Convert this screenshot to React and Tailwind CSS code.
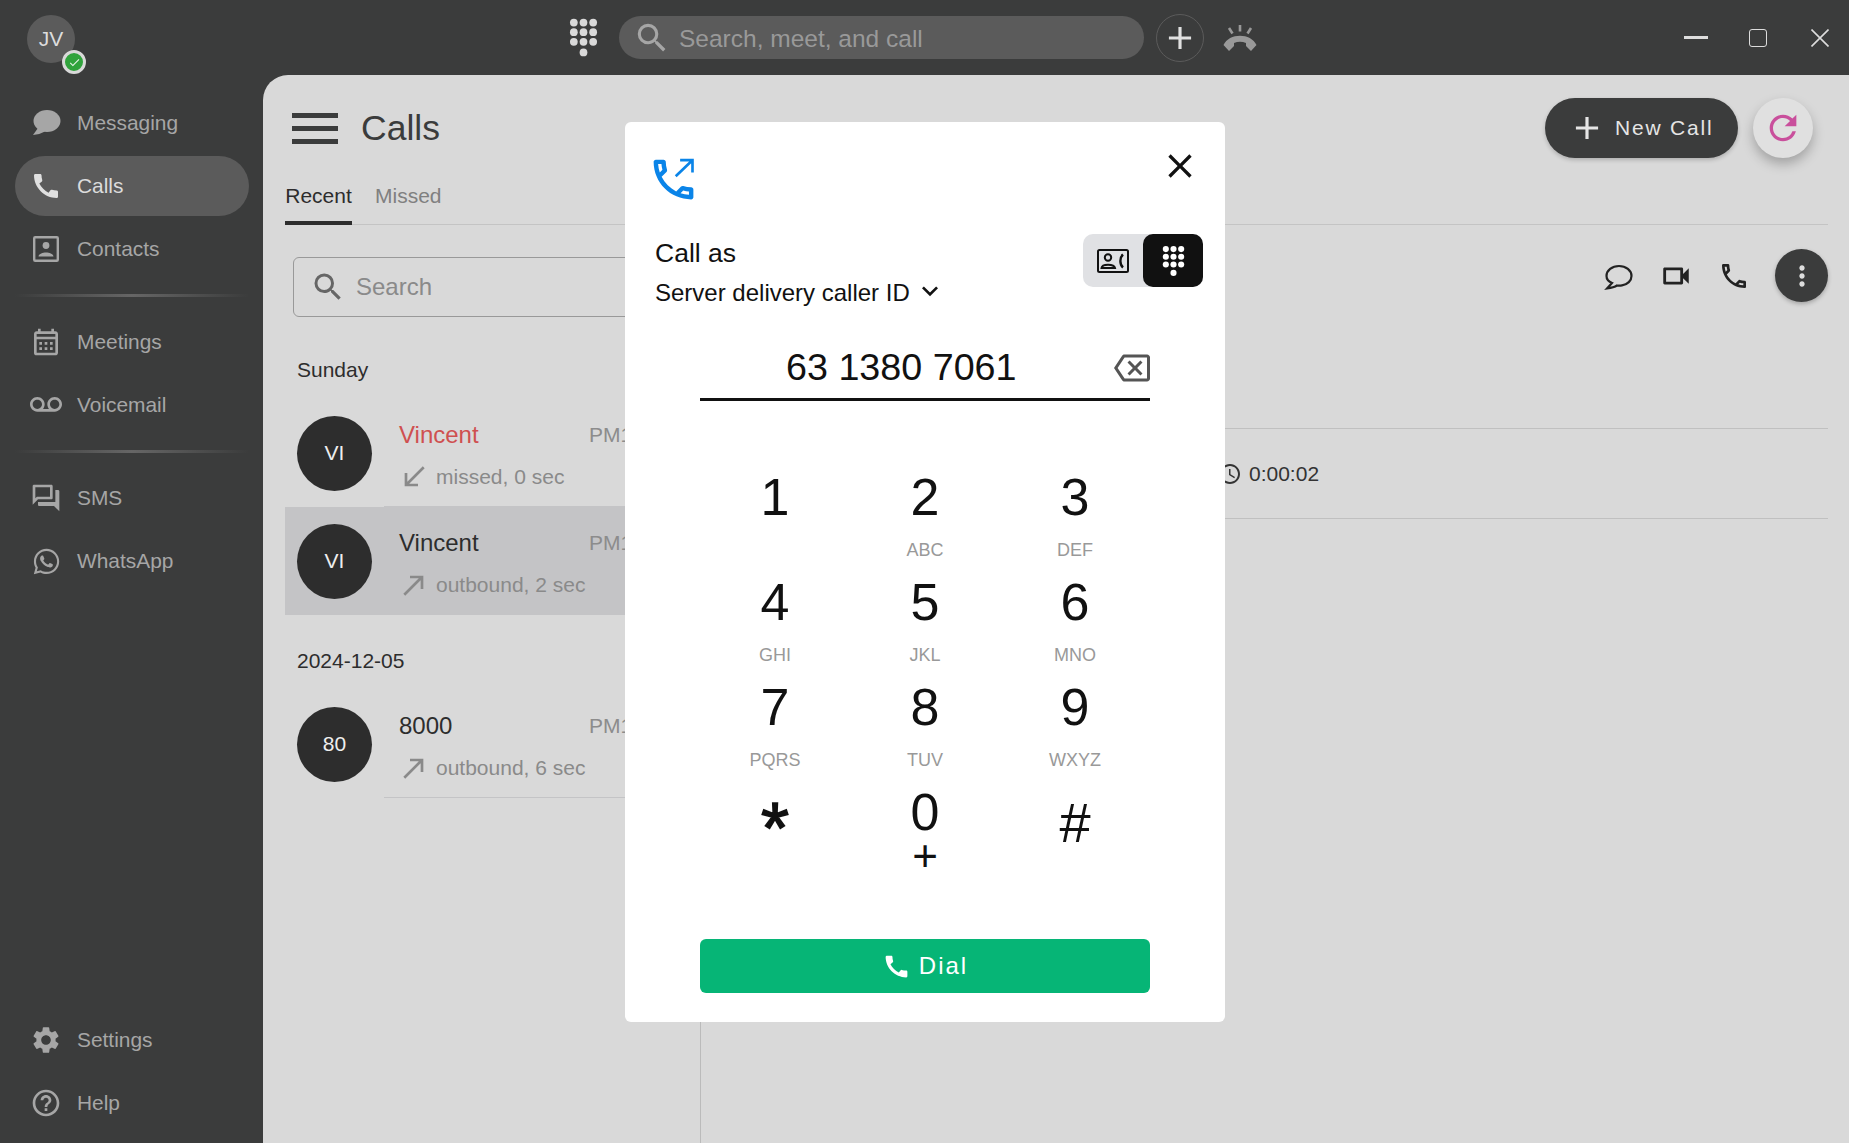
import {
  MdCall, MdOutlineCall, MdOutlineCalendarMonth, MdOutlineVoicemail, MdOutlineForum,
  MdSettings, MdHelpOutline, MdSearch, MdAdd, MdRefresh, MdClose, MdOutlineBackspace, MdAccessTime,
  MdOutlineVideocam, MdMoreVert, MdCallMade, MdCallReceived, MdKeyboardArrowDown, MdCheck,
} from "react-icons/md";
import { FaWhatsapp } from "react-icons/fa";

const KEYS = [
  ["1", ""], ["2", "ABC"], ["3", "DEF"],
  ["4", "GHI"], ["5", "JKL"], ["6", "MNO"],
  ["7", "PQRS"], ["8", "TUV"], ["9", "WXYZ"],
];

function Dialpad({ className }) {
  const dots = [];
  [4, 14, 24].forEach((y) => [5, 15, 25].forEach((x) => dots.push([x, y])));
  dots.push([15, 35]);
  return (
    <svg viewBox="0 0 30 39" className={className} fill="currentColor">
      {dots.map(([x, y]) => <circle key={`${x}-${y}`} cx={x} cy={y} r="4" />)}
    </svg>
  );
}

function Bubble({ outline }) {
  if (outline) {
    return (
      <svg viewBox="0 0 32 32" className="w-8 h-8" fill="none" stroke="#222" strokeWidth="2.2">
        <path d="M10 23 L5 28.5 Q12 27.5 15 25.5 Q17.5 25.8 20 25.4 C25.5 24.5 29.5 20.8 29.5 16 C29.5 10.5 24 6 17 6 C10 6 4.5 10.5 4.5 16 C4.5 19 6.5 21.5 10 23 Z" />
      </svg>
    );
  }
  return (
    <svg viewBox="0 0 32 32" className="w-8 h-8" fill="#a6a6a6">
      <ellipse cx="17" cy="14" rx="13.5" ry="11" />
      <path d="M8 21 L3 28 Q10 27.5 15 24.5 Z" />
    </svg>
  );
}

function ContactBox() {
  return (
    <svg viewBox="0 0 32 32" className="w-8 h-8" fill="#a6a6a6">
      <rect x="4.2" y="4.2" width="23.6" height="23.6" rx="1" fill="none" stroke="#a6a6a6" strokeWidth="2.4" />
      <circle cx="16" cy="12.5" r="3.4" />
      <path d="M8.5 23.5 C9 18 23 18 23.5 23.5 Z" />
    </svg>
  );
}

function NavItem({ icon, label, active }) {
  return (
    <div className={`flex items-center h-[60px] w-[234px] pl-[15px] gap-[15px] rounded-full text-[20.9px] ${active ? "bg-[#5b5b5b] text-[#dcdcdc]" : "text-[#a6a6a6]"}`}>
      <span className={`flex items-center justify-center w-8 h-8 ${active ? "text-[#e0e0e0]" : "text-[#a6a6a6]"}`}>{icon}</span>
      {label}
    </div>
  );
}

function NavDivider({ className }) {
  return <div className={`h-[3px] w-[234px] bg-linear-to-r from-transparent via-[#666666] to-transparent ${className}`} />;
}

function CallRow({ initials, name, missed, status, selected, last }) {
  return (
    <div className={`flex h-[108px] pl-3 whitespace-nowrap ${selected ? "bg-[#c4c4c6]" : ""}`}>
      <div className="flex items-center justify-center w-[75px] h-[108px] shrink-0">
        <div className="flex items-center justify-center w-[75px] h-[75px] rounded-full bg-[#2d2d2d] text-[#eeeeee] text-[21px]">{initials}</div>
      </div>
      <div className={`flex-1 ml-3 pl-[15px] pt-[22px] ${last || !selected ? "border-b border-[#c4c4c6]" : ""}`}>
        <div className="flex items-center h-7">
          <span className={`w-[190px] text-[24px] leading-7 ${missed ? "text-[#cf5050]" : "text-[#2d2d2d]"}`}>{name}</span>
          <span className="text-[21px] text-[#8c8c8c]">PM1:24</span>
        </div>
        <div className="flex items-center mt-4 h-6 -ml-px text-[21px] text-[#8a8a8a] gap-[6px]">
          {missed ? <MdCallReceived size={32} /> : <MdCallMade size={32} />}
          {status}
        </div>
      </div>
    </div>
  );
}

export default function App() {
  return (
    <div className="relative flex flex-col w-[1849px] h-[1143px] overflow-hidden bg-[#3b3c3c] font-[Liberation_Sans,Arial,sans-serif]">
      {/* Title bar */}
      <div className="flex items-center h-[75px] shrink-0 pl-[27px] pr-5">
        <div className="relative flex items-center justify-center w-12 h-12 mt-[3px] rounded-full bg-[#5b5b5b] text-[#dddddd] text-[21px]">
          JV
          <div className="absolute left-[35px] top-[35px] flex items-center justify-center w-6 h-6 rounded-full bg-[#30a33c] border-[3px] border-[#d9d9d9]">
            <MdCheck size={13} className="text-[#e8f5e9]" />
          </div>
        </div>
        <Dialpad className="w-[29px] h-[39px] ml-[494px] -mt-px text-[#d9d9d9]" />
        <div className="flex items-center w-[525px] h-[43px] ml-[21px] pl-3.5 gap-2 rounded-full bg-[#5b5b5b] text-[24.5px] text-[#999999]">
          <MdSearch size={38} className="text-[#a6a6a6]" />
          <span className="pt-1">Search, meet, and call</span>
        </div>
        <div className="flex items-center justify-center w-12 h-12 ml-3 rounded-full border border-[#5b5b5b] text-[#e0e0e0]">
          <MdAdd size={38} />
        </div>
        <svg viewBox="0 0 34 26" className="w-[34px] h-[26px] ml-[19px]" fill="#999999" stroke="none">
          <path d="M0.5 20 C6 7.5 28 7.5 33.5 20 L28 26 L23 21 L23 18 C19 16.3 15 16.3 11 18 L11 21 L6 26 Z" />
          <path d="M17 0 V6.5 M6 3 L9.5 8.5 M28 3 L24.5 8.5" stroke="#999999" strokeWidth="2.6" fill="none" />
        </svg>
        <div className="w-6 h-[3px] ml-auto bg-[#dddddd]" />
        <div className="w-[18px] h-[18px] ml-[41px] rounded-[3px] border border-[#dddddd]" />
        <svg viewBox="0 0 18 18" className="w-[18px] h-[18px] ml-11" stroke="#dddddd" strokeWidth="1.6">
          <path d="M0.5 0.5 L17.5 17.5 M17.5 0.5 L0.5 17.5" />
        </svg>
      </div>

      <div className="flex flex-1 min-h-0">
        {/* Sidebar */}
        <div className="flex flex-col w-[263px] shrink-0 pl-[15px] pt-[18px] pb-2.5">
          <div className="flex flex-col gap-[3px]">
            <NavItem icon={<Bubble />} label="Messaging" />
            <NavItem icon={<MdCall size={32} />} label="Calls" active />
            <NavItem icon={<ContactBox />} label="Contacts" />
          </div>
          <NavDivider className="mt-[15px] mb-[15px]" />
          <div className="flex flex-col gap-[3px]">
            <NavItem icon={<MdOutlineCalendarMonth size={32} />} label="Meetings" />
            <NavItem icon={<MdOutlineVoicemail size={32} />} label="Voicemail" />
          </div>
          <NavDivider className="mt-[15px] mb-[15px]" />
          <div className="flex flex-col gap-[3px]">
            <NavItem icon={<MdOutlineForum size={32} />} label="SMS" />
            <NavItem icon={<FaWhatsapp size={29} />} label="WhatsApp" />
          </div>
          <div className="flex flex-col gap-[3px] mt-auto">
            <NavItem icon={<MdSettings size={32} />} label="Settings" />
            <NavItem icon={<MdHelpOutline size={32} />} label="Help" />
          </div>
        </div>

        {/* Main panel */}
        <div className="flex flex-col flex-1 min-w-0 pl-[22px] pr-[21px] rounded-tl-[25px] bg-[#d9d9d9]">
          <div className="flex items-center h-[60px] mt-[23px] shrink-0">
            <div className="flex flex-col gap-2 w-[46px] ml-[7px]">
              <div className="h-[5px] bg-[#3b3c3c]" />
              <div className="h-[5px] bg-[#3b3c3c]" />
              <div className="h-[5px] bg-[#3b3c3c]" />
            </div>
            <div className="ml-[23px] pt-0.5 text-[35.5px] text-[#3b3c3c]">Calls</div>
            <div className="flex items-center w-[193px] h-[60px] ml-auto pl-[23px] gap-[9px] rounded-full bg-[#3b3c3c] text-[#e5e5e5] text-[21px] tracking-[1.8px] shadow-[0_2px_4px_rgba(0,0,0,0.2)]">
              <MdAdd size={38} />
              New Call
            </div>
            <div className="flex items-center justify-center w-[60px] h-[60px] ml-[15px] mr-[15px] rounded-full bg-[#e0e0e0] text-[#c94f9c] shadow-[0_6px_12px_rgba(0,0,0,0.25)]">
              <MdRefresh size={40} />
            </div>
          </div>

          <div className="flex h-[67px] shrink-0 items-end gap-6 border-b border-[#c4c4c4] text-[21px]">
            <div className="flex items-center h-[46px] w-[67px] justify-center -mb-px pb-2 border-b-4 border-[#2d2d2d] text-[#2d2d2d]">Recent</div>
            <div className="flex items-center h-[46px] pb-3 -mb-px -ml-px text-[#808080]">Missed</div>
          </div>

          <div className="flex flex-1 min-h-0">
            {/* Call history */}
            <div className="w-[416px] shrink-0 pt-8 border-r border-[#bbbbbb] overflow-hidden">
              <div className="flex items-center h-[60px] ml-2 mr-2.5 pl-4 gap-2.5 rounded-[6px] border border-[#999999] text-[24px] text-[#8a8a8a]">
                <MdSearch size={36} className="text-[#666666]" />
                Search
              </div>
              <div className="h-7 mt-[39px] mb-[15px] ml-3 text-[21px] leading-7 text-[#2d2d2d]">Sunday</div>
              <CallRow initials="VI" name="Vincent" missed status="missed, 0 sec" />
              <CallRow initials="VI" name="Vincent" status="outbound, 2 sec" selected />
              <div className="h-7 mt-8 mb-[15px] ml-3 text-[21px] leading-7 text-[#2d2d2d]">2024-12-05</div>
              <CallRow initials="80" name="8000" status="outbound, 6 sec" last />
            </div>

            {/* Call details */}
            <div className="flex-1 min-w-0">
              <div className="flex items-center justify-end gap-[25px] h-[53px] mt-6 text-[#222222]">
                <Bubble outline />
                <MdOutlineVideocam size={34} />
                <MdOutlineCall size={32} />
                <div className="flex items-center justify-center w-[53px] h-[53px] rounded-full bg-[#3b3c3c] text-[#dddddd] shadow-[0_2px_4px_rgba(0,0,0,0.25)]">
                  <MdMoreVert size={32} />
                </div>
              </div>
              <div className="flex items-center h-[91px] mt-[126px] pl-[517px] gap-[7px] border-y border-[#c0c0c0] text-[21px] text-[#333333]">
                <MdAccessTime size={24} />
                0:00:02
              </div>
            </div>
          </div>
        </div>
      </div>

      {/* Dial dialog */}
      <div className="absolute left-[625px] top-[122px] w-[600px] h-[900px] pt-[38px] pl-[30px] pr-[22px] rounded-[6px] bg-white text-[#111111]">
        <div className="flex justify-between h-10">
          <svg viewBox="0 0 24 24" className="w-[53px] h-[53px] -ml-2 -mt-[7px]" fill="#0a84e8">
            <path d="M6.54 5c.06.89.21 1.76.45 2.59l-1.2 1.2c-.41-1.2-.67-2.47-.76-3.79h1.51m9.86 12.02c.85.24 1.72.39 2.6.45v1.49c-1.32-.09-2.59-.35-3.8-.75l1.2-1.19M7.5 3H4c-.55 0-1 .45-1 1 0 9.39 7.61 17 17 17 .55 0 1-.45 1-1v-3.49c0-.55-.45-1-1-1-1.24 0-2.45-.2-3.57-.57-.1-.04-.21-.05-.31-.05-.26 0-.51.1-.71.29l-2.2 2.2c-2.83-1.45-5.15-3.76-6.59-6.59l2.2-2.2c.28-.28.36-.67.25-1.02C8.7 6.45 8.5 5.25 8.5 4c0-.55-.45-1-1-1z" />
            <path d="M13 10.5 L20.2 3.6 M15 3.2 H20.6 V8.8" fill="none" stroke="#0a84e8" strokeWidth="1.2" />
          </svg>
          <MdClose size={40} className="-mt-3.5 mr-[3px]" />
        </div>

        <div className="flex justify-between mt-[34px]">
          <div>
            <div className="mt-1 text-[26.5px] leading-[30px]">Call as</div>
            <div className="flex items-center h-7 mt-[11px] text-[24px] leading-7">
              Server delivery caller ID
              <MdKeyboardArrowDown size={32} className="ml-1 -mt-1" />
            </div>
          </div>
          <div className="flex w-[120px] h-[53px] rounded-[10px] bg-[#e0e1e4]">
            <div className="flex items-center justify-center w-[60px]">
              <svg viewBox="0 0 32 24" className="w-8 h-6" fill="none" stroke="#111111" strokeWidth="2">
                <rect x="1" y="1" width="30" height="22" rx="1.5" />
                <circle cx="11" cy="8.5" r="3.2" />
                <path d="M4.5 19 C5 14.5 17 14.5 18 19 Z" />
                <path d="M26 5.5 C22.5 8.5 22.5 15.5 26 18.5" strokeWidth="2.4" />
              </svg>
            </div>
            <div className="flex items-center justify-center w-[60px] rounded-[10px] bg-[#111111] text-white">
              <Dialpad className="w-[23px] h-[30px]" />
            </div>
          </div>
        </div>

        <div className="flex items-center w-[450px] h-[56px] mt-[38px] ml-[45px] pl-[86px] pb-2 border-b-[3px] border-[#111111]">
          <span className="-mt-0.5 text-[37.7px] leading-[44px]">63 1380 7061</span>
          <MdOutlineBackspace size={36} className="ml-auto text-[#555555]" />
        </div>

        {/* Keypad */}
        <div className="grid grid-cols-3 w-[450px] mt-[66px] ml-[45px]">
          {KEYS.map(([digit, letters]) => (
            <div key={digit} className="flex flex-col items-center h-[105px]">
              <div className="h-[60px] text-[52px] leading-[60px]">{digit}</div>
              <div className="h-5 mt-[13px] text-[18px] leading-5 text-[#999999]">{letters}</div>
            </div>
          ))}
          <div className="flex flex-col items-center h-[105px]">
            <div className="h-[60px] mt-[10px] text-[72px] leading-[72px] [-webkit-text-stroke:1.5px_#111111]">*</div>
          </div>
          <div className="flex flex-col items-center h-[105px]">
            <div className="h-[60px] text-[52px] leading-[60px]">0</div>
            <div className="h-5 mt-1 text-[44px] leading-5">+</div>
          </div>
          <div className="flex flex-col items-center h-[105px]">
            <div className="h-[60px] mt-[11px] text-[56px] leading-[60px]">#</div>
          </div>
        </div>

        <div className="flex items-center justify-center w-[450px] h-[54px] mt-[52px] ml-[45px] gap-2 rounded-[6px] bg-[#06b576] text-white text-[24px] tracking-[2px]">
          <MdCall size={29} />
          Dial
        </div>
      </div>
    </div>
  );
}
